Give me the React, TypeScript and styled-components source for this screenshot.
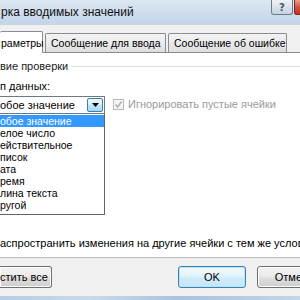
import styled, { createGlobalStyle } from 'styled-components';

const GlobalStyle = createGlobalStyle`
  html, body {
    margin: 0;
    padding: 0;
    background: #f0f0f0;
  }
  body {
    font-family: 'Liberation Sans', Arial, sans-serif;
    font-size: 11px;
    color: #000;
  }
`;

const Window = styled.div`
  width: 300px;
  height: 300px;
  display: flex;
  flex-direction: column;
  overflow: hidden;
  background: #f0f0f0;
`;

const TitleBar = styled.div`
  height: 25px;
  flex-shrink: 0;
  display: flex;
  align-items: flex-start;
  background: linear-gradient(180deg, #dce7f3 0%, #cddbec 60%, #c4d5e9 100%);
`;

const Title = styled.div`
  flex: 1;
  padding: 4px 0 0 1px;
  font-size: 12px;
  line-height: 16px;
  color: #111;
  white-space: nowrap;
`;

const CaptionButton = styled.div<{ $close?: boolean }>`
  width: ${p => (p.$close ? '6px' : '22px')};
  height: 15px;
  margin-left: ${p => (p.$close ? '1px' : '0')};
  box-sizing: border-box;
  border: 1px solid ${p => (p.$close ? '#7a2a20' : '#6d7b8c')};
  border-top: none;
  border-right: ${p => (p.$close ? 'none' : undefined)};
  border-radius: 0 0 ${p => (p.$close ? '0 3px' : '3px 3px')};
  background: ${p =>
    p.$close
      ? 'linear-gradient(180deg, #e8a192 0%, #d35440 50%, #c03321 100%)'
      : 'linear-gradient(180deg, #eef2f7 0%, #d9e1ea 50%, #c8d3df 100%)'};
  display: flex;
  align-items: center;
  justify-content: center;
  font-family: 'DejaVu Sans', sans-serif;
  font-size: 10px;
  font-weight: bold;
  color: #4b5766;
`;

const Body = styled.div`
  flex: 1;
  display: flex;
  flex-direction: column;
  padding-top: 5px;
  background: #f0f0f0;
`;

const TabRow = styled.div`
  height: 22px;
  display: flex;
  align-items: flex-end;
  gap: 2px;
`;

const Tab = styled.div<{ $active?: boolean; $w: number }>`
  width: ${p => p.$w}px;
  height: ${p => (p.$active ? 22 : 19)}px;
  box-sizing: border-box;
  flex-shrink: 0;
  padding-left: ${p => (p.$active ? 1 : 5)}px;
  border: 1px solid #898c95;
  border-bottom: none;
  border-left: ${p => (p.$active ? 'none' : undefined)};
  border-radius: 2px 2px 0 0;
  background: ${p => (p.$active ? '#fff' : 'linear-gradient(180deg, #f2f2f2 0%, #ebebeb 50%, #dddddd 100%)')};
  margin-bottom: ${p => (p.$active ? '-1px' : '0')};
  position: relative;
  display: flex;
  align-items: center;
  font-size: 10.5px;
  white-space: nowrap;
`;

const Panel = styled.div`
  height: 206px;
  box-sizing: border-box;
  flex-shrink: 0;
  background: #fff;
  border-top: 1px solid #898c95;
  border-bottom: 1px solid #b9bcc3;
  display: flex;
  flex-direction: column;
  padding-top: 6px;
`;

const GroupHeader = styled.div`
  display: flex;
  align-items: center;
  gap: 3px;
  height: 14px;
  line-height: 14px;
  white-space: nowrap;
  color: #1a1a1a;
`;

const GroupLine = styled.div`
  flex: 1;
  height: 1px;
  background: #d5dfe5;
`;

const FieldLabel = styled.div`
  margin-top: 6px;
  height: 14px;
  line-height: 14px;
`;

const FieldRow = styled.div`
  margin-top: 3px;
  display: flex;
  align-items: flex-start;
`;

const SelectWrap = styled.div`
  position: relative;
  width: 105px;
  flex-shrink: 0;
`;

const SelectBox = styled.div`
  height: 18px;
  box-sizing: border-box;
  border: 1px solid #6f7a86;
  border-left: none;
  padding-right: 1px;
  display: flex;
  align-items: center;
  justify-content: space-between;
  background: #fff;
`;

const SelectValue = styled.span`
  line-height: 14px;
  white-space: nowrap;
`;

const DropButton = styled.div`
  width: 16px;
  height: 14px;
  box-sizing: border-box;
  border: 1px solid #3c7fb1;
  border-radius: 2px;
  background: linear-gradient(180deg, #eaf6fd 0%, #d9f0fc 45%, #bee6fd 55%, #a7d9f5 100%);
  display: flex;
  align-items: center;
  justify-content: center;
`;

const DropList = styled.div`
  position: absolute;
  top: 100%;
  left: 0;
  width: 105px;
  box-sizing: border-box;
  border: 1px solid #646464;
  border-left: none;
  border-top: none;
  background: #fff;
  padding: 1px 0 3px;
  z-index: 2;
`;

const DropItem = styled.div<{ $selected?: boolean }>`
  height: 12px;
  line-height: 12px;
  font-size: 10.5px;
  white-space: nowrap;
  overflow: hidden;
  background: ${p => (p.$selected ? '#3399ff' : 'transparent')};
  color: ${p => (p.$selected ? '#fff' : '#000')};
`;

const CheckLabel = styled.label<{ $disabled?: boolean }>`
  display: flex;
  align-items: center;
  gap: 4px;
  white-space: nowrap;
  color: ${p => (p.$disabled ? '#9a9a9a' : '#000')};
  line-height: 14px;
`;

const CheckBox = styled.span<{ $disabled?: boolean }>`
  width: 11px;
  height: 11px;
  box-sizing: border-box;
  border: 1px solid ${p => (p.$disabled ? '#b8b8b8' : '#8e8f8f')};
  background: ${p => (p.$disabled ? '#f4f4f4' : '#fff')};
  display: flex;
  align-items: center;
  justify-content: center;
  flex-shrink: 0;
`;

const IgnoreCheck = styled(CheckLabel)`
  margin-left: 8px;
  margin-top: 1px;
`;

const SpreadRow = styled.div`
  margin-top: auto;
  margin-bottom: 7px;
  height: 14px;
  line-height: 14px;
  white-space: nowrap;
`;

const Footer = styled.div`
  flex: 1;
  display: flex;
  align-items: center;
  padding-bottom: 1px;
`;

const Button = styled.div<{ $w: number; $default?: boolean; $cut?: boolean }>`
  width: ${p => p.$w}px;
  height: 22px;
  flex-shrink: 0;
  box-sizing: border-box;
  border: 1px solid ${p => (p.$default ? '#3c7fb1' : '#707070')};
  border-left: ${p => (p.$cut ? 'none' : undefined)};
  border-radius: ${p => (p.$cut ? '0 3px 3px 0' : '3px')};
  box-shadow: ${p => (p.$default ? 'inset 0 0 0 1px #b6e4f9' : 'inset 0 0 0 1px #fcfcfc')};
  background: ${p =>
    p.$default
      ? 'linear-gradient(180deg, #f2f9fd 0%, #e3f3fc 45%, #cfebfa 55%, #c6e6f8 100%)'
      : 'linear-gradient(180deg, #f2f2f2 0%, #ebebeb 45%, #dddddd 55%, #cfcfcf 100%)'};
  display: flex;
  align-items: center;
  justify-content: ${p => (p.$cut ? 'flex-start' : 'center')};
  white-space: nowrap;
  overflow: hidden;
`;

const OkButton = styled(Button)`
  margin-left: 126px;
`;

const CancelButton = styled(Button)`
  margin-left: 11px;
`;

const BottomFrame = styled.div`
  height: 4px;
  flex-shrink: 0;
  background: linear-gradient(90deg, #b7cde3 0%, #c9d9ea 30%, #aac2dc 60%, #c4d6e8 100%);
`;

const Check = ({ color }: { color: string }) => (
  <svg width="9" height="9" viewBox="0 0 9 9">
    <path d="M1.5 4.5 L3.6 7 L7.6 1.5" fill="none" stroke={color} strokeWidth="1.4" />
  </svg>
);

const items = [
  'обое значение',
  'елое число',
  'ействительное',
  'писок',
  'ата',
  'ремя',
  'лина текста',
  'ругой',
];

export default function App() {
  return (
    <Window>
      <GlobalStyle />
      <TitleBar>
        <Title>рка вводимых значений</Title>
        <CaptionButton>?</CaptionButton>
        <CaptionButton $close />
      </TitleBar>
      <Body>
        <TabRow>
          <Tab $active $w={43}>раметры</Tab>
          <Tab $w={121}>Сообщение для ввода</Tab>
          <Tab $w={119}>Сообщение об ошибке</Tab>
        </TabRow>
        <Panel>
          <GroupHeader>
            вие проверки
            <GroupLine />
          </GroupHeader>
          <FieldLabel>п данных:</FieldLabel>
          <FieldRow>
            <SelectWrap>
              <SelectBox>
                <SelectValue>обое значение</SelectValue>
                <DropButton>
                  <svg width="7" height="4" viewBox="0 0 7 4">
                    <path d="M0 0 H7 L3.5 4 Z" fill="#000" />
                  </svg>
                </DropButton>
              </SelectBox>
              <DropList>
                {items.map((item, i) => (
                  <DropItem key={item} $selected={i === 0}>
                    {item}
                  </DropItem>
                ))}
              </DropList>
            </SelectWrap>
            <IgnoreCheck $disabled>
              <CheckBox $disabled>
                <Check color="#b0b0b0" />
              </CheckBox>
              Игнорировать пустые ячейки
            </IgnoreCheck>
          </FieldRow>
          <SpreadRow>аспространить изменения на другие ячейки с тем же условием</SpreadRow>
        </Panel>
        <Footer>
          <Button $w={52} $cut>
            стить все
          </Button>
          <OkButton $w={68} $default>
            OK
          </OkButton>
          <CancelButton $w={75}>Отмена</CancelButton>
        </Footer>
      </Body>
      <BottomFrame />
    </Window>
  );
}
